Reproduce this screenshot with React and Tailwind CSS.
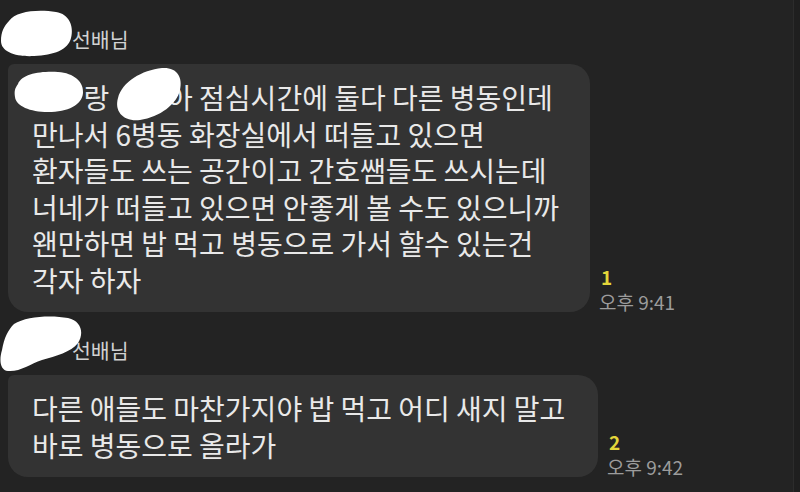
import React from 'react';

const messages = [
  {
    id: 1,
    unread: '1',
    time: '오후 9:41',
    width: 'w-[582px]',
    lines: [
      'ㅇㅇ랑 ㅇㅇ아 점심시간에 둘다 다른 병동인데',
      '만나서 6병동 화장실에서 떠들고 있으면',
      '환자들도 쓰는 공간이고 간호쌤들도 쓰시는데',
      '너네가 떠들고 있으면 안좋게 볼 수도 있으니까',
      '왠만하면 밥 먹고 병동으로 가서 할수 있는건',
      '각자 하자',
    ],
  },
  {
    id: 2,
    unread: '2',
    time: '오후 9:42',
    width: 'w-[590px]',
    lines: ['다른 애들도 마찬가지야 밥 먹고 어디 새지 말고', '바로 병동으로 올라가'],
  },
];

// white marker scribbles hiding the names
const Scribbles = () => (
  <svg className="absolute left-0 top-0 pointer-events-none" width="800" height="492" viewBox="0 0 800 492">
    <g fill="#ffffff">
      <path d="M9 21 C16 11 38 9 56 12 C69 14 74 26 71 38 C68 50 54 55 34 56 C16 57 1 52 1 41 C1 32 4 26 9 21 Z" />
      <path d="M18 84 C22 74 40 71 58 72 C74 73 84 82 83 93 C82 105 68 112 48 112 C30 112 16 106 15 97 C14 91 15 88 18 84 Z" />
      <path d="M118 98 C122 82 142 70 162 68 C177 67 183 77 180 90 C177 104 160 117 140 120 C124 122 114 112 118 98 Z" />
      <path d="M14 324 C26 316 52 315 68 318 C82 321 84 334 78 343 C71 352 56 356 42 360 C30 364 20 372 8 371 C0 370 -1 360 2 350 C4 338 8 330 14 324 Z" />
    </g>
  </svg>
);

const Message = ({ msg }) => (
  <div className="flex flex-col">
    <div className="h-[24px] pl-[64px] text-[20.5px] leading-[24px] text-[#d2d2d2]">선배님</div>
    <div className="flex items-end gap-[9px] mt-[13px]">
      <div
        className={`${msg.width} bg-[#333333] rounded-[20px] rounded-tl-[6px] pl-[24px] pt-[15px] pb-[14px] text-[28px] leading-[36.5px] text-[#e9e9e9] whitespace-nowrap`}
      >
        {msg.lines.map((line, i) => (
          <div key={i}>{line}</div>
        ))}
      </div>
      <div className="flex flex-col items-start gap-[5px]">
        <span className="text-[19px] leading-[19px] font-semibold text-[#e3d63a] pl-[2px]">{msg.unread}</span>
        <span className="text-[19px] leading-[21px] text-[#9c9c9c]">{msg.time}</span>
      </div>
    </div>
  </div>
);

export default function App() {
  return (
    <div className="w-[800px] h-[492px] bg-[#232323] flex overflow-hidden font-['Noto_Sans_CJK_KR','Noto_Sans',sans-serif]">
      <div className="relative flex-1 pl-[8px] pt-[27px] flex flex-col gap-[26px]">
        {messages.map((m) => (
          <Message key={m.id} msg={m} />
        ))}
        <Scribbles />
      </div>
      <div className="w-[7px] border-l border-[#2c2c2c] bg-[#1f1f1f]" />
    </div>
  );
}
